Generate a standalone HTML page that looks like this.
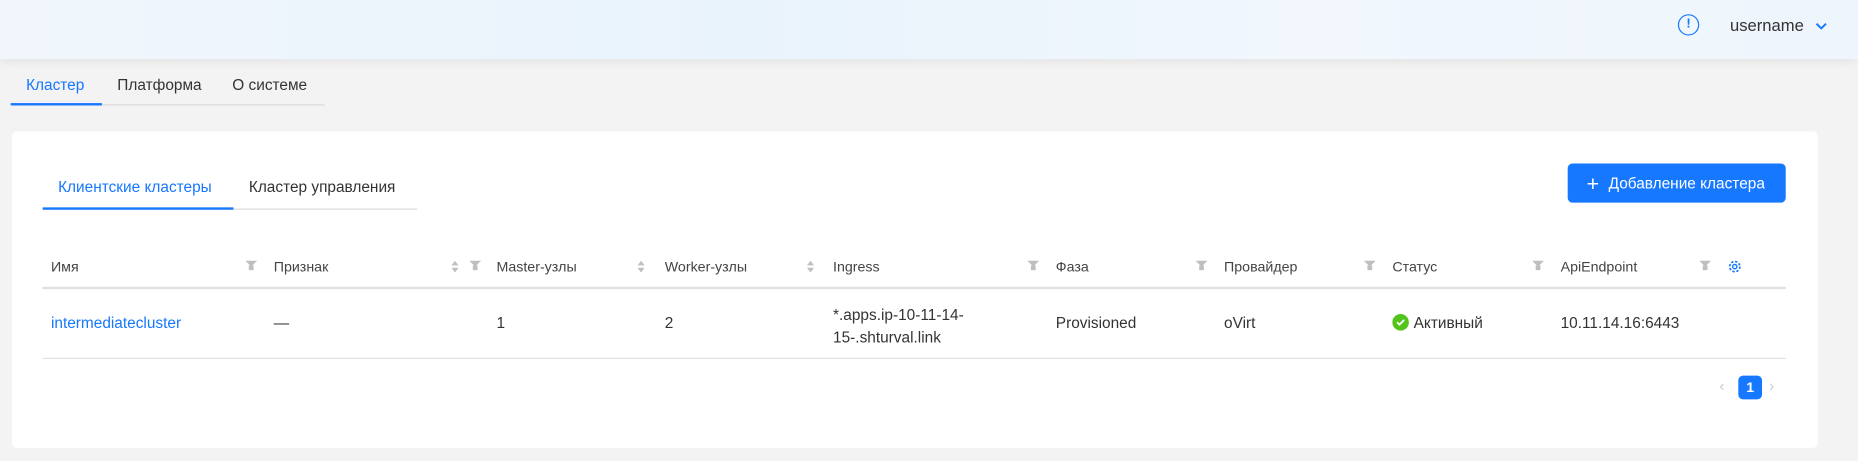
<!DOCTYPE html>
<html><head><meta charset="utf-8"><style>
*{margin:0;padding:0;box-sizing:border-box}
body{width:1858px;height:461px;background:#f3f3f3;font-family:"Liberation Sans",sans-serif;overflow:hidden;color:#333}
#w{position:absolute;left:0;top:0;width:1568px;height:389px;transform:scale(1.18495);transform-origin:0 0}
.hdr{position:absolute;left:0;top:0;width:1568px;height:50px;background:linear-gradient(90deg,#f0f6fc,#e9f3fc 40%,#f1f7fd 70%,#eef5fc);box-shadow:0 2px 8px rgba(0,0,0,.08)}
.a{position:absolute;white-space:nowrap}
.card{position:absolute;left:10px;top:111px;width:1524px;height:267px;background:#fff;border-radius:4px}
.th{font-size:12px;color:#444;top:218px}
.td{font-size:13px;color:#333}
.f{position:absolute;width:0;height:0;border-left:5px solid transparent;border-right:5px solid transparent;border-top:5px solid #bfbfbf}
.fs{position:absolute;width:4px;height:4px;background:#bfbfbf}
</style></head><body><div id="w">
<div class="hdr"></div>
<div class="a" style="left:1416px;top:12px;width:18px;height:18px;border:1.5px solid #1677ff;border-radius:50%;color:#1677ff;font-size:11px;text-align:center;line-height:15px;font-weight:bold">!</div>
<div class="a" style="left:1460px;top:13px;font-size:14px;color:#333">username</div>
<svg class="a" style="left:1532px;top:18px" width="10" height="8"><path d="M1 2l4 4 4-4" stroke="#1677ff" stroke-width="1.6" fill="none"/></svg>

<div class="a" style="left:22px;top:64px;font-size:13px;color:#1677ff">Кластер</div>
<div class="a" style="left:99px;top:64px;font-size:13px;color:#333">Платформа</div>
<div class="a" style="left:196px;top:64px;font-size:13px;color:#333">О системе</div>
<div class="a" style="left:9px;top:88px;width:265px;height:1px;background:#d9d9d9"></div>
<div class="a" style="left:9px;top:87px;width:77px;height:2px;background:#1677ff"></div>

<div class="card"></div>
<div class="a" style="left:49px;top:150px;font-size:13px;color:#1677ff">Клиентские кластеры</div>
<div class="a" style="left:210px;top:150px;font-size:13px;color:#333">Кластер управления</div>
<div class="a" style="left:36px;top:176px;width:316px;height:1px;background:#d9d9d9"></div>
<div class="a" style="left:36px;top:175px;width:161px;height:2px;background:#1677ff"></div>

<div class="a" style="left:1323px;top:138px;width:184px;height:33px;background:#1677ff;border-radius:4px;color:#fff;font-size:13px;line-height:33px;padding-left:16px"><span style="font-size:18px;vertical-align:-2px;margin-right:8px">+</span>Добавление кластера</div>

<div class="a th" style="left:43px">Имя</div>
<div class="a th" style="left:231px">Признак</div>
<div class="a th" style="left:419px">Master-узлы</div>
<div class="a th" style="left:561px">Worker-узлы</div>
<div class="a th" style="left:703px">Ingress</div>
<div class="a th" style="left:891px">Фаза</div>
<div class="a th" style="left:1033px">Провайдер</div>
<div class="a th" style="left:1175px">Статус</div>
<div class="a th" style="left:1317px">ApiEndpoint</div>

<div class="f" style="left:207px;top:220px"></div><div class="fs" style="left:210px;top:224px"></div>
<div class="f" style="left:396px;top:220px"></div><div class="fs" style="left:399px;top:224px"></div>
<div class="f" style="left:867px;top:220px"></div><div class="fs" style="left:870px;top:224px"></div>
<div class="f" style="left:1009px;top:220px"></div><div class="fs" style="left:1012px;top:224px"></div>
<div class="f" style="left:1151px;top:220px"></div><div class="fs" style="left:1154px;top:224px"></div>
<div class="f" style="left:1293px;top:220px"></div><div class="fs" style="left:1296px;top:224px"></div>
<div class="f" style="left:1434px;top:220px"></div><div class="fs" style="left:1437px;top:224px"></div>
<svg class="a" style="left:380px;top:219px" width="8" height="12"><path d="M4 1L7 5H1z M4 11L7 7H1z" fill="#bfbfbf"/></svg>
<svg class="a" style="left:537px;top:219px" width="8" height="12"><path d="M4 1L7 5H1z M4 11L7 7H1z" fill="#bfbfbf"/></svg>
<svg class="a" style="left:680px;top:219px" width="8" height="12"><path d="M4 1L7 5H1z M4 11L7 7H1z" fill="#bfbfbf"/></svg>
<svg class="a" style="left:1458px;top:219px" width="12" height="12"><circle cx="6" cy="6" r="4.3" fill="none" stroke="#1677ff" stroke-width="1.4" stroke-dasharray="2 1.4"/><circle cx="6" cy="6" r="1.8" fill="none" stroke="#1677ff" stroke-width="1.2"/></svg>

<div class="a" style="left:36px;top:242px;width:1471px;height:2px;background:#e0e0e0"></div>

<div class="a td" style="left:43px;top:265px;color:#1677ff">intermediatecluster</div>
<div class="a td" style="left:231px;top:265px">—</div>
<div class="a td" style="left:419px;top:265px">1</div>
<div class="a td" style="left:561px;top:265px">2</div>
<div class="a td" style="left:703px;top:256px;line-height:19px">*.apps.ip-10-11-14-<br>15-.shturval.link</div>
<div class="a td" style="left:891px;top:265px">Provisioned</div>
<div class="a td" style="left:1033px;top:265px">oVirt</div>
<svg class="a" style="left:1175px;top:265px" width="14" height="14"><circle cx="7" cy="7" r="7" fill="#52c41a"/><path d="M4 7l2 2 4-4" stroke="#fff" stroke-width="1.5" fill="none"/></svg>
<div class="a td" style="left:1193px;top:265px">Активный</div>
<div class="a td" style="left:1317px;top:265px">10.11.14.16:6443</div>
<div class="a" style="left:36px;top:302px;width:1471px;height:1px;background:#e0e0e0"></div>

<div class="a" style="left:1451px;top:318px;font-size:13px;color:#ccc">‹</div>
<div class="a" style="left:1467px;top:317px;width:20px;height:20px;background:#1677ff;border-radius:4px;color:#fff;font-size:12px;text-align:center;line-height:20px;font-weight:bold">1</div>
<div class="a" style="left:1493px;top:318px;font-size:13px;color:#ccc">›</div>
</div></body></html>
